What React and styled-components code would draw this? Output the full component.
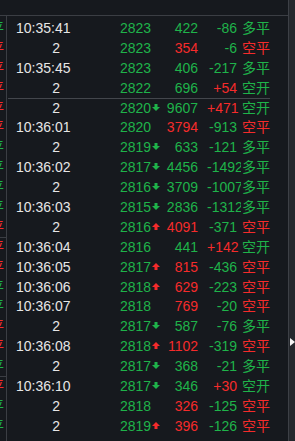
import React from "react";
import styled, { createGlobalStyle } from "styled-components";

const GREEN = "#1fb34a";
const RED = "#f52b2b";
const LINE = "#3b3e44";

const GlobalStyle = createGlobalStyle`
  html, body {
    margin: 0;
    padding: 0;
    background: #16191e;
  }
  body {
    width: 295px;
    height: 441px;
    overflow: hidden;
    font-family: "Liberation Sans", "Noto Sans CJK SC", sans-serif;
  }
`;

const Frame = styled.div`
  display: flex;
  width: 295px;
  height: 441px;
  background: #16191e;
`;

const Panel = styled.div`
  flex: 1;
  min-width: 0;
  display: flex;
  flex-direction: column;
`;

const Header = styled.div`
  height: 15px;
  border-bottom: 1px solid ${LINE};
`;

const Body = styled.div`
  flex: 1;
  display: flex;
  min-height: 0;
`;

// clipped right edge of the neighbouring panel
const Strip = styled.div`
  width: 6px;
  border-right: 1px solid ${LINE};
  overflow: hidden;
  padding-top: 3px;
  font-size: 14px;
`;

const StripRow = styled.div`
  display: flex;
  justify-content: flex-end;
  height: 19.9px;
  line-height: 19px;
  padding-right: 2px;
  box-sizing: border-box;
  white-space: nowrap;
  color: ${(p) => p.$color};
  border-bottom: ${(p) => (p.$sep ? `1px solid ${LINE}` : "0")};
`;

const List = styled.div`
  padding: 3px 0 0 1px;
  font-size: 14px;
`;

const Row = styled.div`
  display: flex;
  width: 262px;
  height: 19.9px;
  line-height: 19.9px;
  box-sizing: border-box;
  white-space: nowrap;
  border-bottom: ${(p) => (p.$sep ? "1px solid #43464c" : "0")};
`;

const Time = styled.div`
  margin-left: 8px;
  width: 44px;
  text-align: right;
  color: #e6e6e6;
`;

const Price = styled.div`
  margin-left: 60px;
  width: 45px;
  color: ${GREEN};
`;

const Volume = styled.div`
  width: 33px;
  text-align: right;
  color: ${(p) => p.$color};
`;

const Change = styled.div`
  margin-left: 9px;
  width: 34px;
  padding-right: 4px;
  box-sizing: border-box;
  text-align: right;
  overflow: hidden;
  color: ${(p) => p.$color};
`;

const Kind = styled.div`
  margin-left: 1px;
  width: 28px;
  color: ${(p) => p.$color};
`;

const ArrowSvg = styled.svg`
  margin-left: 1px;
  vertical-align: 2px;
`;

const Rail = styled.div`
  width: 6px;
  border-left: 1px solid #3d4046;
  background: #25282d;
  padding-top: 338px;
`;

const Expand = styled.div`
  width: 0;
  height: 0;
  margin-left: 1px;
  border-left: 5px solid #f2f2f2;
  border-top: 4px solid transparent;
  border-bottom: 4px solid transparent;
`;

const Arrow = ({ dir }) =>
  dir === "up" ? (
    <ArrowSvg width="8" height="7" viewBox="0 0 8 7">
      <path d="M4 0 L8 4 L5.5 4 L5.5 7 L2.5 7 L2.5 4 L0 4 Z" fill={RED} />
    </ArrowSvg>
  ) : (
    <ArrowSvg width="8" height="7" viewBox="0 0 8 7">
      <path d="M2.5 0 L5.5 0 L5.5 3 L8 3 L4 7 L0 3 L2.5 3 Z" fill={GREEN} />
    </ArrowSvg>
  );

const G = GREEN;
const R = RED;

const ticks = [
  ["10:35:41", "2823", null, "422", G, "-86", G, "多平", G],
  ["2", "2823", null, "354", R, "-6", G, "空平", R],
  ["10:35:45", "2823", null, "406", G, "-217", G, "多平", G],
  ["2", "2822", null, "696", G, "+54", R, "空开", G, true],
  ["2", "2820", "down", "9607", G, "+471", R, "空开", G],
  ["10:36:01", "2820", null, "3794", R, "-913", G, "空平", R],
  ["2", "2819", "down", "633", G, "-121", G, "多平", G],
  ["10:36:02", "2817", "down", "4456", G, "-1492", G, "多平", G],
  ["2", "2816", "down", "3709", G, "-1007", G, "多平", G],
  ["10:36:03", "2815", "down", "2836", G, "-1312", G, "多平", G],
  ["2", "2816", "up", "4091", R, "-371", G, "空平", R],
  ["10:36:04", "2816", null, "441", G, "+142", R, "空开", G],
  ["10:36:05", "2817", "up", "815", R, "-436", G, "空平", R],
  ["10:36:06", "2818", "up", "629", R, "-223", G, "空平", R],
  ["10:36:07", "2818", null, "769", R, "-20", G, "空平", R],
  ["2", "2817", "down", "587", G, "-76", G, "多平", G],
  ["10:36:08", "2818", "up", "1102", R, "-319", G, "空平", R],
  ["2", "2817", "down", "368", G, "-21", G, "多平", G],
  ["10:36:10", "2817", "down", "346", G, "+30", R, "空开", G],
  ["2", "2818", null, "326", R, "-125", G, "空平", R],
  ["2", "2819", "up", "396", R, "-126", G, "空平", R],
];

const stripColors = [G, R, R, R, R, R, G, G, G, G, R, R, R, G, G, R, R, G, R, G, G];
const stripSeps = [10, 17];

const App = () => {
  return (
    <>
      <GlobalStyle />
      <Frame>
        <Panel>
          <Header />
          <Body>
            <Strip>
              {stripColors.map((c, i) => (
                <StripRow key={i} $color={c} $sep={stripSeps.includes(i)}>
                  {c === R ? "空平" : "多平"}
                </StripRow>
              ))}
            </Strip>
            <List>
              {ticks.map(([time, price, dir, vol, volC, chg, chgC, kind, kindC, sep], i) => (
                <Row key={i} $sep={sep}>
                  <Time>{time}</Time>
                  <Price>
                    {price}
                    {dir && <Arrow dir={dir} />}
                  </Price>
                  <Volume $color={volC}>{vol}</Volume>
                  <Change $color={chgC}>{chg}</Change>
                  <Kind $color={kindC}>{kind}</Kind>
                </Row>
              ))}
            </List>
          </Body>
        </Panel>
        <Rail>
          <Expand />
        </Rail>
      </Frame>
    </>
  );
};

export default App;
